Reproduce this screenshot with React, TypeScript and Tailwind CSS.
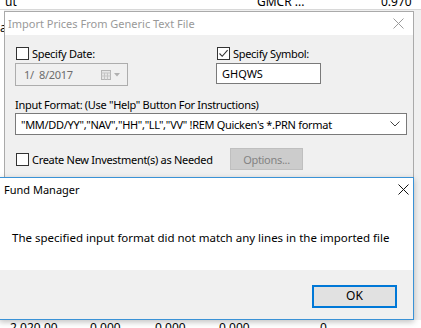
import React from 'react';

function Check({ checked }: { checked?: boolean }) {
  return (
    <span className="flex h-[13px] w-[13px] shrink-0 items-center justify-center border border-[#333333] bg-white">
      {checked && (
        <svg width="11" height="11" viewBox="0 0 11 11">
          <path d="M1.5 5.5 L4.2 8.3 L9.6 2.2" fill="none" stroke="#333333" strokeWidth="1.1" />
        </svg>
      )}
    </span>
  );
}

function CloseX({ color, size = 11 }: { color: string; size?: number }) {
  return (
    <svg width={size} height={size} viewBox="0 0 11 11">
      <path d="M0.5 0.5 L10.5 10.5 M10.5 0.5 L0.5 10.5" stroke={color} strokeWidth="1" />
    </svg>
  );
}

function ImportDialog() {
  return (
    <div className="absolute left-[4px] top-[11px] h-[190px] w-[410px] border border-[#aaaaaa] bg-[#f0f0f0]">
      {/* title bar, inactive */}
      <div className="flex h-[23px] items-center justify-between bg-white pl-[3px] pr-[9px]">
        <span className="text-[11px] text-[#999999]">Import Prices From Generic Text File</span>
        <CloseX color="#9a9a9a" />
      </div>

      <div className="flex flex-col whitespace-nowrap pl-[10px] pt-[12px] text-[11px] tracking-[-0.3px]">
        <div className="flex">
          <div className="flex w-[201px] flex-col gap-[3px]">
            <label className="flex items-center gap-[3px] pl-[1px]">
              <Check />
              <span>Specify Date:</span>
            </label>
            <div className="flex h-[23px] w-[113px] items-center justify-between border border-[#adadad] bg-[#f0f0f0] pl-[8px] pr-[7px]">
              <span className="text-[#6d6d6d]">1/&nbsp;&nbsp;8/2017</span>
              <span className="flex items-center gap-[3px]">
                <svg width="10" height="10" viewBox="0 0 10 10">
                  <rect x="0.5" y="0.5" width="9" height="9" fill="#e6e6e6" stroke="#b5b5b5" />
                  <path d="M0.5 3 H9.5 M3.5 3 V9.5 M6.5 3 V9.5 M0.5 6 H9.5" stroke="#c5c5c5" strokeWidth="1" />
                </svg>
                <svg width="6" height="4" viewBox="0 0 6 4">
                  <path d="M0 0 H6 L3 3.5 Z" fill="#b0b0b0" />
                </svg>
              </span>
            </div>
          </div>
          <div className="flex flex-col gap-[3px]">
            <label className="flex items-center gap-[3px] pl-[1px]">
              <Check checked />
              <span>Specify Symbol:</span>
            </label>
            <div className="flex h-[21px] w-[105px] items-center border border-[#7a7a7a] bg-white pl-[5px]">
              <span className="text-black tracking-normal">GHQWS</span>
            </div>
          </div>
        </div>

        <div className="mt-[11px] leading-[15px]">Input Format: (Use "Help" Button For Instructions)</div>
        <div className="mt-[1px] flex h-[22px] w-[392px] items-center justify-between border border-[#7a7a7a] bg-white pl-[5px] pr-[6px]">
          <span className="whitespace-pre">"MM/DD/YY","NAV","HH","LL","VV" !REM Quicken's *.PRN format</span>
          <svg width="10" height="6" viewBox="0 0 10 6">
            <path d="M0.5 0.5 L5 5 L9.5 0.5" fill="none" stroke="#444444" strokeWidth="1" />
          </svg>
        </div>

        <div className="mt-[13px] flex items-center">
          <label className="flex w-[215px] items-center gap-[3px] pl-[1px]">
            <Check />
            <span>Create New Investment(s) as Needed</span>
          </label>
          <button className="flex h-[22px] w-[73px] items-center justify-center border border-[#bfbfbf] bg-[#cccccc] text-[#838383]">
            Options...
          </button>
        </div>
      </div>
    </div>
  );
}

function MessageBox() {
  return (
    <div className="absolute left-[-1px] top-[177px] flex h-[143px] w-[415px] flex-col border border-[#3a92d6] bg-white shadow-[0_2px_6px_rgba(0,0,0,0.25)]">
      <div className="flex h-[22px] items-center justify-between pl-[4px] pr-[4px]">
        <span className="text-[11px] text-black">Fund Manager</span>
        <CloseX color="#111111" size={11} />
      </div>
      <div className="flex h-[70px] items-center whitespace-nowrap pl-[12px] pt-[6px] text-[11.5px]">
        <span className="text-black">The specified input format did not match any lines in the imported file</span>
      </div>
      <div className="flex flex-1 items-center justify-end bg-[#f0f0f0] pr-[16px] pt-[3px]">
        <button className="flex h-[23px] w-[85px] items-center justify-center border-2 border-[#0078d7] bg-[#e1e1e1] text-black">
          OK
        </button>
      </div>
    </div>
  );
}

export default function App() {
  return (
    <div className="relative h-[328px] w-[421px] overflow-hidden bg-white font-['Segoe_UI','Noto_Sans',sans-serif] text-[12px] leading-none text-black">
      {/* background application grid */}
      <div className="flex h-full flex-col">
        <div className="flex h-[10px] items-end overflow-hidden border-b border-[#d8d8d8] pb-[1px]">
          <span className="ml-[5px] w-[252px]">ut</span>
          <span className="w-[124px]">GMCR ...</span>
          <span>0.970</span>
        </div>
        <div className="flex flex-1 bg-[#f0f0f0]">
          <div className="w-[4px] bg-white pt-[12px] text-[12px]">a</div>
        </div>
        <div className="flex h-[8px] items-start overflow-hidden bg-white pt-[2px]">
          <span className="ml-[10px] w-[80px]">2,020.00</span>
          <span className="w-[65px]">0.000</span>
          <span className="w-[64px]">0.000</span>
          <span className="w-[101px]">0.000</span>
          <span>0</span>
        </div>
      </div>

      <ImportDialog />
      <MessageBox />
    </div>
  );
}
